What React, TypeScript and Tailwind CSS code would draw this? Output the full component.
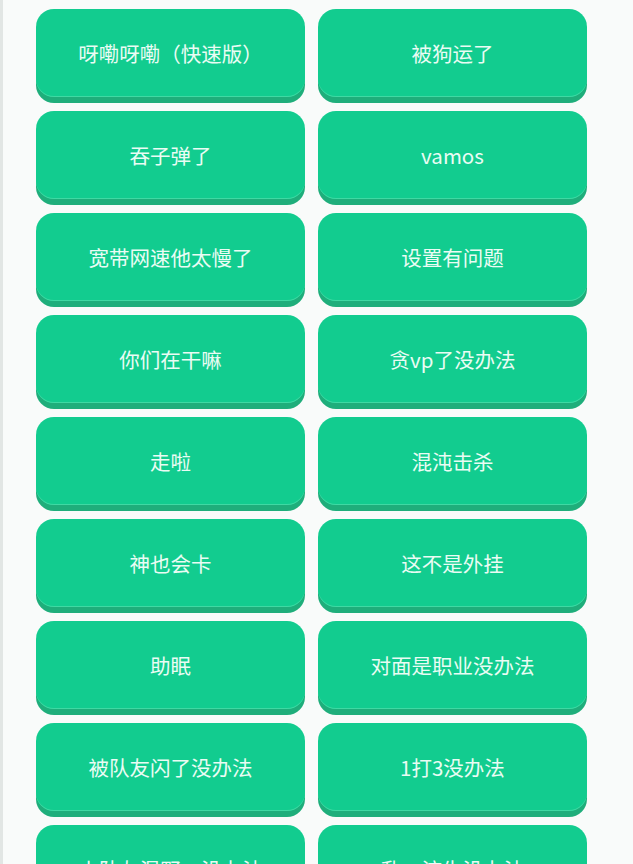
import React from "react";

const items: string[] = [
  "呀嘞呀嘞（快速版）",
  "被狗运了",
  "吞子弹了",
  "vamos",
  "宽带网速他太慢了",
  "设置有问题",
  "你们在干嘛",
  "贪vp了没办法",
  "走啦",
  "混沌击杀",
  "神也会卡",
  "这不是外挂",
  "助眠",
  "对面是职业没办法",
  "被队友闪了没办法",
  "1打3没办法",
  "小队友混野，没办法",
  "乱，流失没办法",
];

export default function App() {
  return (
    <div
      className="flex min-h-screen bg-[#f9fbfa]"
      style={{ fontFamily: '"Noto Sans CJK SC", "Noto Sans", sans-serif' }}
    >
      <div className="w-[3px] shrink-0 bg-[#e2e6e4]" />
      <div className="grid grid-cols-[269px_269px] gap-x-[13px] gap-y-[14px] pl-[33px] pt-[9px] pb-8 content-start">
        {items.map((t) => (
          <div
            key={t}
            className="flex h-[88px] items-center justify-center rounded-[18px] bg-[#12cc8f] text-[20.5px] text-[#eafcf4] shadow-[inset_0_-1px_0_#3fd9a3,0_6px_0_#1fae7b]"
          >
            {t}
          </div>
        ))}
      </div>
    </div>
  );
}
